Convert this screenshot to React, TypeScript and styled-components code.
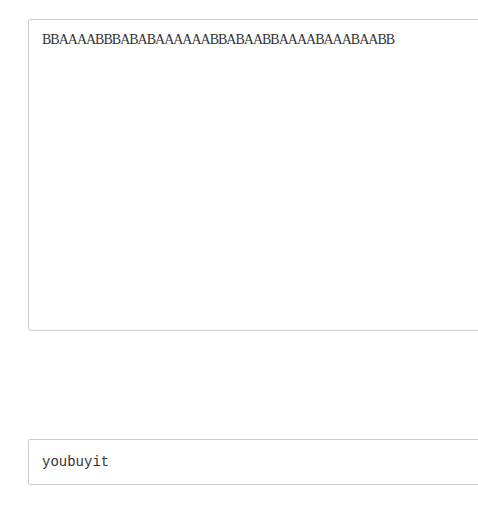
import React from "react";
import styled, { createGlobalStyle } from "styled-components";

const Global = createGlobalStyle`
  html, body {
    margin: 0;
    padding: 0;
    background: #fff;
    overflow: hidden;
  }
`;

const Page = styled.div`
  display: flex;
  flex-direction: column;
  gap: 108px;
  padding: 19px 0 0 28px;
  width: 560px;
`;

const TextArea = styled.textarea`
  box-sizing: border-box;
  display: block;
  width: 520px;
  height: 312px;
  margin: 0;
  padding: 10px 13px;
  border: 1px solid #cccccc;
  border-radius: 3px;
  font-family: "Liberation Serif", serif;
  font-size: 14px;
  line-height: 20px;
  letter-spacing: -1px;
  color: #333333;
  resize: none;
  outline: none;
  background: #fff;
`;

const Field = styled.input`
  box-sizing: border-box;
  display: block;
  width: 520px;
  height: 46px;
  margin: 0;
  padding: 0 13px;
  border: 1px solid #cccccc;
  border-radius: 2px;
  font-family: "Liberation Mono", monospace;
  font-size: 14px;
  color: #333333;
  outline: none;
  background: #fff;
`;

export default function App() {
  return (
    <>
      <Global />
      <Page>
        <TextArea readOnly value="BBAAAABBBABABAAAAAABBABAABBAAAABAAABAABB" />
        <Field readOnly value="youbuyit" />
      </Page>
    </>
  );
}
